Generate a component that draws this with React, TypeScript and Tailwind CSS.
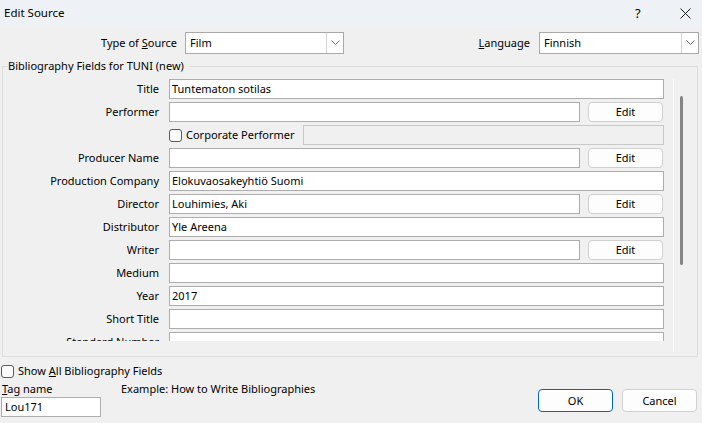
import React from "react";

const font = { fontFamily: '"Noto Sans", "Open Sans", sans-serif' };

interface FieldProps {
  label: string;
  value?: string;
  edit?: boolean;
}

const Field: React.FC<FieldProps> = ({ label, value, edit }) => {
  return (
    <div className="flex items-center h-[20px] shrink-0">
      <span className="w-[157px] text-right pr-[1px] whitespace-nowrap">{label}</span>
      <div
        className={`ml-[9px] h-[20px] border border-[#adadad] bg-white pl-[2px] flex items-center whitespace-nowrap ${
          edit ? "w-[411px]" : "w-[495px]"
        }`}
      >
        {value}
      </div>
      {edit && (
        <button className="ml-[8px] w-[75px] h-[20px] rounded-[4px] border border-[#d0d0d0] bg-[#fdfdfd] flex items-center justify-center">
          Edit
        </button>
      )}
    </div>
  );
};

const Select: React.FC<{ value: string; width: string }> = ({ value, width }) => {
  return (
    <div className={`${width} h-[22px] border border-[#a9a9a9] bg-white flex items-center`}>
      <span className="flex-1 pl-[4px]">{value}</span>
      <div className="w-[17px] h-[20px] border-l border-[#d4d4d4] flex items-center justify-center">
        <svg width="9" height="6" viewBox="0 0 9 6">
          <path d="M0.5 0.5 L4.5 4.5 L8.5 0.5" fill="none" stroke="#6d6d6d" strokeWidth="1" />
        </svg>
      </div>
    </div>
  );
};

const CheckBox: React.FC = () => (
  <div className="w-[13px] h-[13px] shrink-0 rounded-[3px] border border-[#5a5a5a] bg-[#fbfbfb]" />
);

export default function App() {
  const fields: FieldProps[] = [
    { label: "Title", value: "Tuntematon sotilas" },
    { label: "Performer", edit: true },
  ];
  const fields2: FieldProps[] = [
    { label: "Producer Name", edit: true },
    { label: "Production Company", value: "Elokuvaosakeyhtiö Suomi" },
    { label: "Director", value: "Louhimies, Aki", edit: true },
    { label: "Distributor", value: "Yle Areena" },
    { label: "Writer", edit: true },
    { label: "Medium" },
    { label: "Year", value: "2017" },
    { label: "Short Title" },
    { label: "Standard Number" },
  ];

  return (
    <div
      style={font}
      className="w-[702px] h-[423px] bg-[#f0f0f0] text-[11px] text-black leading-[16px] flex flex-col overflow-hidden"
    >
      {/* title bar */}
      <div className="h-[26px] bg-[#eef2f6] flex items-center shrink-0">
        <span className="pl-[4px] flex-1 text-[11.5px]">Edit Source</span>
        <span className="w-[10px] text-[13px] mr-[35px]">?</span>
        <svg width="11" height="11" viewBox="0 0 11 11" className="mr-[11px]">
          <path d="M0.5 0.5 L10.5 10.5 M10.5 0.5 L0.5 10.5" stroke="#1a1a1a" strokeWidth="1" />
        </svg>
      </div>

      {/* source / language */}
      <div className="flex items-center mt-[6px] h-[22px] shrink-0">
        <span className="w-[177px] text-right">
          Type of <u>S</u>ource
        </span>
        <div className="ml-[8px]">
          <Select value="Film" width="w-[159px]" />
        </div>
        <span className="w-[186px] text-right">
          <u>L</u>anguage
        </span>
        <div className="ml-[9px]">
          <Select value="Finnish" width="w-[160px]" />
        </div>
      </div>

      {/* bibliography fields */}
      <fieldset className="ml-[2px] mr-[4px] mt-[5px] border border-[#dcdcdc] shrink-0 min-w-0">
        <legend className="ml-[5px] pr-[5px] leading-[14px]">Bibliography Fields for TUNI (new)</legend>
        <div className="flex items-start mt-[6px] mb-[4px]">
          <div className="flex-1 min-w-0 h-[262px] overflow-hidden flex flex-col gap-[3px]">
            {fields.map((f) => (
              <Field key={f.label} {...f} />
            ))}
            <div className="flex items-center h-[20px] shrink-0">
              <div className="ml-[166px] w-[134px] flex items-center">
                <CheckBox />
                <span className="ml-[4px] whitespace-nowrap">Corporate Performer</span>
              </div>
              <div className="w-[361px] h-[20px] border border-[#c8c8c8] bg-[#f0f0f0]" />
            </div>
            {fields2.map((f) => (
              <Field key={f.label} {...f} />
            ))}
          </div>
          <div className="w-[24px] shrink-0 h-[273px] border-l border-white pl-[6px] pt-[17px]">
            <div className="w-[3px] h-[169px] rounded-full bg-[#858585]" />
          </div>
        </div>
      </fieldset>

      {/* bottom */}
      <div className="flex items-end">
        <div className="flex flex-col pl-[1px]">
          <div className="flex items-center mt-[6px]">
            <CheckBox />
            <span className="ml-[4px]">
              Show <u>A</u>ll Bibliography Fields
            </span>
          </div>
          <div className="flex mt-[2px] pl-[1px]">
            <span className="w-[119px]">
              <u>T</u>ag name
            </span>
            <span>Example: How to Write Bibliographies</span>
          </div>
          <div className="w-[100px] h-[20px] border border-[#adadad] bg-white pl-[3px] flex items-center">
            Lou171
          </div>
        </div>
        <div className="ml-auto flex gap-[9px] mr-[5px] mb-[5px]">
          <button className="w-[75px] h-[23px] rounded-[4px] border border-[#0067c0] bg-[#fdfdfd] flex items-center justify-center">
            OK
          </button>
          <button className="w-[75px] h-[23px] rounded-[4px] border border-[#d0d0d0] bg-[#fdfdfd] flex items-center justify-center">
            Cancel
          </button>
        </div>
      </div>
    </div>
  );
}
